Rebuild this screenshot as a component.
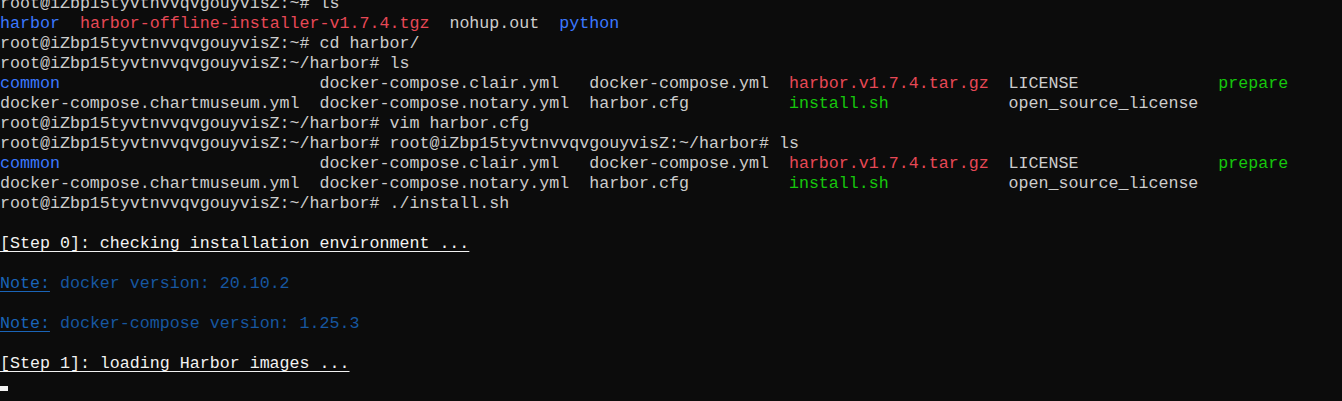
const PROMPT = "root@iZbp15tyvtnvvqvgouyvisZ:";

const Line = ({ children }: { children?: React.ReactNode }) => (
  <div className="h-[20px] leading-[20px] whitespace-pre">{children ?? " "}</div>
);

const Blue = ({ children }: { children: React.ReactNode }) => (
  <span className="text-[#3b78ff]">{children}</span>
);
const Red = ({ children }: { children: React.ReactNode }) => (
  <span className="text-[#e74856]">{children}</span>
);
const Green = ({ children }: { children: React.ReactNode }) => (
  <span className="text-[#16c60c]">{children}</span>
);

const Listing = () => (
  <>
    <Line>
      <Blue>common</Blue>
      {"                          docker-compose.clair.yml   docker-compose.yml  "}
      <Red>harbor.v1.7.4.tar.gz</Red>
      {"  LICENSE              "}
      <Green>prepare</Green>
    </Line>
    <Line>
      {"docker-compose.chartmuseum.yml  docker-compose.notary.yml  harbor.cfg          "}
      <Green>install.sh</Green>
      {"            open_source_license"}
    </Line>
  </>
);

const Note = ({ text }: { text: string }) => (
  <Line>
    <span className="text-[#1a64b8] underline underline-offset-[3px]">Note:</span>
    <span className="text-[#1757a0]">{" " + text}</span>
  </Line>
);

const Step = ({ text }: { text: string }) => (
  <Line>
    <span className="text-[#f2f2f2] underline underline-offset-[3px]">{text}</span>
  </Line>
);

export default function App() {
  return (
    <div className="w-[1342px] h-[401px] overflow-hidden bg-[#0c0c0c] text-[#cccccc] font-['Liberation_Mono',monospace] text-[16.65px]">
      <div className="-mt-[6px]">
        <Line>{PROMPT + "~# ls"}</Line>
        <Line>
          <Blue>harbor</Blue>
          {"  "}
          <Red>harbor-offline-installer-v1.7.4.tgz</Red>
          {"  nohup.out  "}
          <Blue>python</Blue>
        </Line>
        <Line>{PROMPT + "~# cd harbor/"}</Line>
        <Line>{PROMPT + "~/harbor# ls"}</Line>
        <Listing />
        <Line>{PROMPT + "~/harbor# vim harbor.cfg"}</Line>
        <Line>{PROMPT + "~/harbor# " + PROMPT + "~/harbor# ls"}</Line>
        <Listing />
        <Line>{PROMPT + "~/harbor# ./install.sh"}</Line>
        <Line />
        <Step text="[Step 0]: checking installation environment ..." />
        <Line />
        <Note text="docker version: 20.10.2" />
        <Line />
        <Note text="docker-compose version: 1.25.3" />
        <Line />
        <Step text="[Step 1]: loading Harbor images ..." />
        <Line>
          <span className="inline-block w-[8px] h-[5px] bg-[#f2f2f2] align-[-3px]" />
        </Line>
      </div>
    </div>
  );
}
